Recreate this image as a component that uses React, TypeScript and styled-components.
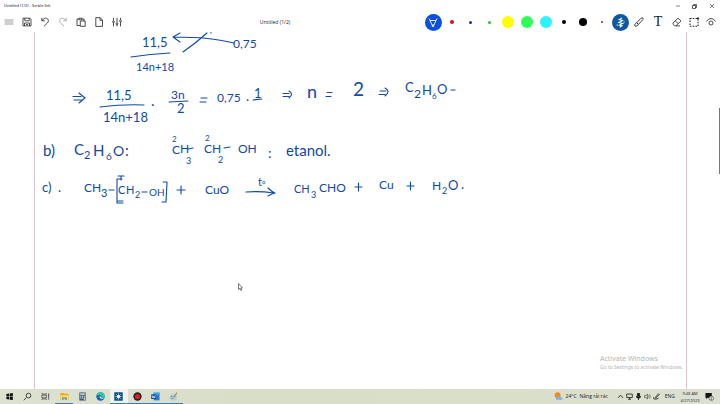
import React from "react";
import styled, { createGlobalStyle } from "styled-components";

const GlobalStyle = createGlobalStyle`
  * { box-sizing: border-box; }
  body { margin: 0; background: #fff; font-family: "Open Sans", "Noto Sans", sans-serif; color: #222; }
  button { font: inherit; color: inherit; border: 0; padding: 0; background: none; }
`;

const Window = styled.div`
  display: flex;
  flex-direction: column;
  height: 100vh;
  overflow: hidden;
`;
const TitleBar = styled.header`
  display: flex;
  justify-content: space-between;
  align-items: center;
  height: 12px;
  padding-left: 4px;
  font-family: "Noto Sans", sans-serif;
  font-size: 4px;
  line-height: 6px;
  color: #111;
`;
const WindowButtons = styled.div`
  display: grid;
  grid-template-columns: repeat(3, 17px);
`;
const IconButton = styled.button`
  display: flex;
  align-items: center;
  justify-content: center;
  min-width: 0;
  height: 100%;
`;
const Toolbar = styled.nav`
  display: flex;
  align-items: center;
  height: 20px;
`;
const FileTools = styled.div`
  display: grid;
  grid-template-columns: repeat(7, 18px);
  height: 100%;
`;
const PenTools = styled.div`
  display: grid;
  grid-template-columns: repeat(14, 1fr) 17px 17px;
  width: 296px;
  height: 100%;
`;
const DocumentName = styled.div`
  flex: 1;
  text-align: center;
  font-size: 5px;
  line-height: 8px;
`;
const Dot = styled.span<{ $size: number; $color: string }>`
  width: ${(p) => p.$size}px;
  height: ${(p) => p.$size}px;
  border-radius: 50%;
  background: ${(p) => p.$color};
`;
const RoundTool = styled.span<{ $color: string }>`
  display: flex;
  align-items: center;
  justify-content: center;
  flex: none;
  width: 17px;
  height: 17px;
  border-radius: 50%;
  background: ${(p) => p.$color};
`;
const TextToolGlyph = styled.span`
  font-family: "Liberation Serif", serif;
  font-size: 14px;
  line-height: 16px;
`;
const Canvas = styled.main`
  position: relative;
  display: flex;
  flex: 1;
  min-height: 0;
  padding-left: 34px;
`;
const Page = styled.section`
  flex: 1;
  border: solid #dfc4cd;
  border-width: 0 1px;
`;
const ScrollTrack = styled.div`
  display: flex;
  justify-content: flex-end;
  width: 33px;
  padding-top: 76px;
`;
const ScrollThumb = styled.div`
  width: 1px;
  height: 66px;
  background: #777;
`;
const Ink = styled.svg`
  position: absolute;
  inset: 0 auto auto 0;
  overflow: hidden;
  font-family: Lato, "Open Sans", sans-serif;
  fill: #1049a8;
`;
const Watermark = styled.aside`
  position: absolute;
  right: 31px;
  bottom: 18px;
  min-width: 89px;
  color: #b5b5b5;
  font-family: "Noto Sans", sans-serif;
  font-size: 5px;
  line-height: 8px;
`;
const WatermarkTitle = styled.div`
  font-size: 7px;
  line-height: 9px;
`;
const Pointer = styled.svg`
  position: absolute;
  left: 238px;
  top: 251px;
`;
const Taskbar = styled.footer`
  display: flex;
  justify-content: space-between;
  height: 15px;
  background: linear-gradient(90deg, #dde1d0, #d9dec9 35%, #dadfca 70%, #dce0d2);
  font-size: 5px;
  line-height: 7px;
`;
const Apps = styled.div`
  display: grid;
  grid-template-columns: repeat(10, 1fr);
  width: 183px;
`;
const AppButton = styled.button<{ $running?: boolean; $active?: boolean }>`
  display: flex;
  align-items: center;
  justify-content: center;
  min-width: 0;
  background: ${(p) => (p.$active ? "#f1f3ec" : "none")};
  box-shadow: ${(p) => (p.$running ? "inset 0 -1px #2d7fc8" : "none")};
`;
const Tray = styled.div`
  display: flex;
  align-items: center;
  gap: 4px;
  padding-right: 6px;
`;
const Weather = styled.button`
  display: flex;
  align-items: center;
  gap: 3px;
  margin-right: 4px;
  white-space: nowrap;
`;
const TrayIcons = styled.div`
  display: grid;
  grid-template-columns: repeat(5, 9px);
  height: 15px;
`;
const Clock = styled.time`
  display: block;
  width: 22px;
  text-align: center;
  font-size: 4px;
  line-height: 7px;
`;

type IconProps = { size?: number; stroke?: string; width?: number; children: React.ReactNode };
const Icon = ({ size = 10, stroke = "#222", width = 0.8, children }: IconProps) => (
  <svg width={size} height={size} viewBox="0 0 10 10" fill="none" stroke={stroke} strokeWidth={width} aria-hidden="true">
    {children}
  </svg>
);

const fileTools = [
  { label: "Menu", art: <path d="M.5 3h9M.5 5h9M.5 7h9" stroke="#777" strokeWidth=".7" /> },
  { label: "Save", art: <path d="M1 1.2h7l1 1v6.7H1zM2.8 1.2v2.6h4.4V1.2M2.5 9V6h5v3M4 7.5h2" /> },
  { label: "Undo", art: <path d="M1.8.8v3h3M2 3.7C3.4 1.5 5 .8 6.5 1.3 8.7 2 9 4.5 7.4 6L4 9.2" /> },
  { label: "Redo", art: <path d="M8.2.8v3h-3M8 3.7C6.6 1.5 5 .8 3.5 1.3 1.3 2 1 4.5 2.6 6L6 9.2" stroke="#999" /> },
  { label: "Paste", art: <path d="M4 8.5H1V2h2m3 0h2v2M3 1.2h3v1.6H3zM4.3 4h4.9v5.3H4.3z" /> },
  { label: "New page", art: <path d="M1.8.6h4.3l2.4 2.6v6.2H1.8zM6 .7v2.6h2.4" /> },
  { label: "Settings", art: <path d="M1.5.8v3m0 2v3.6M5 .8v5m0 2v1.6M8.5.8v2m0 2v4.6M.6 4.8a.9.9 0 1 0 1.8 0 .9.9 0 1 0-1.8 0M4.1 6.8a.9.9 0 1 0 1.8 0 .9.9 0 1 0-1.8 0M7.6 3.8a.9.9 0 1 0 1.8 0 .9.9 0 1 0-1.8 0" /> },
];

const pens = [
  { label: "Red pen", size: 4, color: "#d81016" },
  { label: "Blue pen", size: 3, color: "#1428c8" },
  { label: "Green pen", size: 3, color: "#20c820" },
  { label: "Yellow highlighter", size: 12, color: "#ffff00" },
  { label: "Green highlighter", size: 12, color: "#2fff56" },
  { label: "Cyan highlighter", size: 12, color: "#2df2ff" },
  { label: "Thin black pen", size: 4, color: "#000" },
  { label: "Black pen", size: 8, color: "#000" },
  { label: "Purple pen", size: 2, color: "#6a1b9a" },
];

type Mark = [text: string, x: number, y: number, size: number];
const marks: Mark[] = [
  ["11,5", 142, 47, 13],
  ["14n+18", 136, 71, 11],
  ["0,75", 233, 48, 12],
  ["11,5", 106, 100, 13],
  ["14n+18", 103, 122, 13],
  [".", 151, 106, 15],
  ["3n", 171, 99, 12],
  ["2", 177, 113, 13],
  ["0,75", 217, 102, 12],
  [".", 246, 101, 13],
  ["1", 254, 98, 13],
  ["n", 307, 98, 18],
  ["2", 353, 96, 19],
  ["C", 405, 92, 13],
  ["2", 414, 98, 12],
  ["H", 422, 95, 13],
  ["6", 432, 99, 8],
  ["O", 437, 94, 13],
  ["b)", 43, 156, 15],
  ["C", 74, 155, 15],
  ["2", 84, 159, 11],
  ["H", 93, 156, 15],
  ["6", 106, 160, 10],
  ["O", 113, 156, 14],
  [":", 125, 156, 15],
  ["2", 172, 142, 8],
  ["C", 172, 154, 12],
  ["H", 180, 153, 12],
  ["3", 186, 164, 9],
  ["2", 205, 141, 8],
  ["C", 204, 153, 12],
  ["H", 212, 153, 12],
  ["2", 218, 163, 9],
  ["OH", 238, 153, 12],
  [":", 268, 158, 14],
  ["etanol.", 286, 156, 15],
  ["c)", 42, 192, 13],
  [".", 58, 192, 13],
  ["C", 84, 192, 12],
  ["H", 92, 192, 12],
  ["3", 101, 197, 11],
  ["C", 118, 194, 11],
  ["H", 126, 194, 11],
  ["2", 135, 198, 9],
  ["OH", 149, 196, 10],
  ["CuO", 205, 194, 12],
  ["t", 258, 186, 11],
  ["o", 262, 184, 6],
  ["CH", 294, 193, 11],
  ["3", 311, 198, 9],
  ["CHO", 319, 192, 12],
  ["Cu", 379, 189, 12],
  ["H", 432, 190, 12],
  ["2", 442, 194, 9],
  ["O", 448, 190, 13],
  [".", 461, 189, 13],
];

const strokes = [
  "M131 57Q150 54 170 53",
  "M234 43C216 39 202 37 173 37M180 33L173 37L180 42",
  "M183 52Q196 43 207 33M211 32.5v.5",
  "M100 107Q125 104 144 105",
  "M169 102L188 101",
  "M73 96.500h8M74 100h8M79 93l6 5l-6 5",
  "M201 98h6M200 102h6M253 100l9-1",
  "M283 93.500h6M283 96.500h6M289 91q5 3 0 7",
  "M327 92.500h5M326 96.500h5",
  "M380 91h6M379 94.500h6M385 88q6 3 0 8",
  "M451 90h4",
  "M188 149l5-1M224 148l6-1",
  "M109 190h5M142 192h5",
  "M122 179h-5v24h6M118 201h5M118 176h6M121 176v4",
  "M163 182h4l-1 20h-4",
  "M177 190h8M181 186v8",
  "M246 192Q260 191 274 193M268 188q4 4 7 5q-4 1-7 3",
  "M355 187h7M358.500 183v8M407 186h7M410.500 182v8",
];

const apps = [
  { label: "Start", art: <path d="M1.5 2.2l3-.5v3h-3zM5.2 1.600l3.500-.5v3.600H5.200zM1.500 5.400h3v3l-3-.5zM5.200 5.400h3.500V9l-3.500-.5z" fill="#111" stroke="none" /> },
  { label: "Search", art: <path d="M3.600 6.200L.8 9.200M3.500 4a2.600 2.600 0 1 0 5.200 0a2.600 2.600 0 1 0-5.200 0" /> },
  { label: "Task view", art: <path d="M1 3.500h5v3H1zM1 1.500v.8h5v-.8M1 8.500v-.8h5v.8M8.500 1.500v7M8 4h1" strokeWidth=".7" /> },
  { label: "File Explorer", running: true, art: <g stroke="none"><path d="M.5 1h3.500l1 1h4.500v7H.5z" fill="#e9a928" /><path d="M.5 3.500h9V9h-9z" fill="#ffd65a" /><path d="M2.500 9V6.200h5V9H6.200V7.500H3.800V9z" fill="#3e93d8" /></g> },
  { label: "Calculator", art: <g stroke="none"><path d="M1.500.5h7v9h-7z" fill="#3c5870" /><path d="M2.400 1.400h5.200v1.800H2.400z" fill="#b7dbee" /><path d="M2.400 4.200h1.300v1.100H2.400zm2 0h1.300v1.100H4.400zm2 0h1.300v1.100H6.400zm-4 2h1.300v1.100H2.400zm2 0h1.300v1.100H4.400zm2 0h1.300v2.500H6.400z" fill="#e0edf4" /></g> },
  { label: "Edge", art: <g stroke="none"><circle cx="5" cy="5" r="4.700" fill="#1269bd" /><path d="M.5 4.500C1 1.800 3-.1 5.500.3 8 .5 9.700 2.500 9.700 4.600 9.700 6.200 8 7 6.100 6.500 7 5 5.500 3.300 3.500 3.400 2 3.400 1 3.900.5 4.500z" fill="#37c6a5" /><path d="M4.100 4.800c-.6 1.500 1 3.300 3.800 3L9 7.100C7 7.400 5.700 6.800 5.800 5.500z" fill="#eaf3ef" /></g> },
  { label: "Scrble Ink", running: true, active: true, art: <g stroke="none"><path d="M.3.3h9.400v9.400H.3z" fill="#0b4f8c" /><path d="M5 1.500v7M1.500 5h7M2.500 2.500l5 5M7.500 2.500l-5 5" stroke="#c5e3f6" strokeWidth=".8" /><circle cx="5" cy="5" r="1.700" fill="#fff" /></g> },
  { label: "Recorder", running: true, art: <g stroke="none"><circle cx="5" cy="5" r="4.600" fill="#202020" /><circle cx="5" cy="5" r="2.900" fill="#ed171f" /></g> },
  { label: "Word", running: true, art: <g stroke="none"><path d="M3 .7h6.500v8.600H3z" fill="#2b7cd3" /><path d="M3 .7h6.500v2.500H3z" fill="#41a5ee" /><path d="M.2 2.500h5.600v5.300H.2z" fill="#154ea5" /><path d="M1.200 3.700l.9 3L3 4.500l.9 2.200.9-3" stroke="#fff" strokeWidth=".7" fill="none" /></g> },
  { label: "Paint", running: true, art: <g stroke="none"><ellipse cx="4.700" cy="6" rx="4" ry="3.500" fill="#a9d0df" /><circle cx="3" cy="5" r=".8" fill="#e35b54" /><circle cx="3.500" cy="7.300" r=".8" fill="#58a756" /><path d="M9 .5L5.200 6" stroke="#b98035" strokeWidth="1.200" /></g> },
];

const trayIcons = [
  { label: "Show hidden icons", art: <path d="M1.500 7L5 3l3.500 4" strokeWidth="1.200" /> },
  { label: "Display", art: <path d="M1 1.500h8v5H1zM3 9h4M5 6.500V9" strokeWidth="1.200" /> },
  { label: "Microphone", art: <path d="M3.500.5h3v5h-3zM2 4.500q0 3 3 3t3-3M5 7.500V10" fill="#111" strokeWidth="1.200" /> },
  { label: "Volume", art: <path d="M.8 3.500h2L5 1.500v7l-2.200-2h-2zM6.500 3.500q1 1.500 0 3M8 2q2 3 0 6" stroke="#555" /> },
  { label: "Windows Ink", art: <path d="M3 6.500L8 1l1 1-5 5.200zM1 6q-1 3 2 2.800t5-1.300" strokeWidth="1.200" /> },
];

export default function App() {
  return (
    <>
      <GlobalStyle />
      <Window>
        <TitleBar>
          <span>Untitled (1/2) - Scrble Ink</span>
          <WindowButtons>
            <IconButton aria-label="Minimize"><Icon size={4} width={1.4}><path d="M0 5h10" /></Icon></IconButton>
            <IconButton aria-label="Restore"><Icon size={5} width={1.4}><path d="M1 3h6v6H1zM3 3V1h6v6H7" /></Icon></IconButton>
            <IconButton aria-label="Close"><Icon size={4} width={1.5}><path d="M0 0l10 10M10 0L0 10" /></Icon></IconButton>
          </WindowButtons>
        </TitleBar>
        <Toolbar>
          <FileTools>
            {fileTools.map((t) => (
              <IconButton key={t.label} aria-label={t.label}><Icon>{t.art}</Icon></IconButton>
            ))}
          </FileTools>
          <DocumentName>Untitled (1/2)</DocumentName>
          <PenTools>
            <IconButton aria-label="Selected pen">
              <RoundTool $color="#0a4fe0">
                <Icon size={10} stroke="#fff" width={0.9}><path d="M1 1.500l1 2h6l1-2M2 3.500L4 8h2l2-4.500M4.200 8.500h1.600v1H4.200z" /></Icon>
              </RoundTool>
            </IconButton>
            {pens.map((p) => (
              <IconButton key={p.label} aria-label={p.label}><Dot $size={p.size} $color={p.color} /></IconButton>
            ))}
            <IconButton aria-label="Scribble">
              <RoundTool $color="#0d57a3">
                <Icon size={11} stroke="#fff" width={1}><path d="M6.500.8L3.800 2.300l3 .9-3.300 1.800 3.500.8-3 1.500 2.300.7L4.300 9.300M7.800 4.700l.9-.4M1.500 7.500l.9-.4" /></Icon>
              </RoundTool>
            </IconButton>
            <IconButton aria-label="Ruler"><Icon width={0.9}><path d="M1 7.300L7.300 1q1-.7 1.600.2t0 1.500L2.800 9Q1.800 9.600 1 8.900T1 7.300zM2.700 5.700l1.500 1.500" /></Icon></IconButton>
            <IconButton aria-label="Text"><TextToolGlyph>T</TextToolGlyph></IconButton>
            <IconButton aria-label="Eraser"><Icon><path d="M1 6L6 1.200l3 2.700L4 8.700H2.500L1 7.300zM3.300 4l3 2.700M4 8.900h4" /></Icon></IconButton>
            <IconButton aria-label="Select area"><Icon width={1.1}><path d="M1 1.500h8v7.800H1z" strokeDasharray="1.500 1.300" /><circle cx="9" cy="1.200" r=".5" /></Icon></IconButton>
            <IconButton aria-label="View"><Icon><path d="M.5 4.500Q2 1.500 5 1.500t4.500 3M3 6a2 2 0 1 0 4 0a2 2 0 1 0-4 0" /></Icon></IconButton>
          </PenTools>
        </Toolbar>
        <Canvas>
          <Page aria-label="Page 1" />
          <ScrollTrack><ScrollThumb /></ScrollTrack>
          <Ink width="720" height="357" viewBox="0 32 720 357" role="img" aria-label="Handwritten chemistry notes">
            {marks.map(([text, x, y, size]) => (
              <text key={`${x}-${y}`} x={x} y={y} fontSize={size}>{text}</text>
            ))}
            <g fill="none" stroke="#1049a8" strokeWidth="1.100" strokeLinecap="round" strokeLinejoin="round">
              {strokes.map((d) => <path key={d} d={d} />)}
            </g>
          </Ink>
          <Pointer width="5" height="8" viewBox="0 0 5 8" aria-hidden="true">
            <path d="M.5.5v6l1.300-1.200 1 2.200 1-.5-1-2H4.500z" fill="#fff" stroke="#444" strokeWidth=".7" />
          </Pointer>
          <Watermark>
            <WatermarkTitle>Activate Windows</WatermarkTitle>
            Go to Settings to activate Windows.
          </Watermark>
        </Canvas>
        <Taskbar>
          <Apps>
            {apps.map((a) => (
              <AppButton key={a.label} aria-label={a.label} $running={a.running} $active={a.active}>
                <Icon size={9} width={0.9}>{a.art}</Icon>
              </AppButton>
            ))}
          </Apps>
          <Tray>
            <Weather>
              <Icon size={9}>
                <circle cx="4" cy="3.500" r="3.300" fill="#f18b20" stroke="none" />
                <path d="M2.500 8.500q-1-2.500 1.500-3 2-2 3.500 0Q9.700 5.700 9.500 8.500z" fill="#76b4ea" stroke="none" />
              </Icon>
              <span>24°C</span>
              <span>Nắng rải rác</span>
            </Weather>
            <TrayIcons>
              {trayIcons.map((t) => (
                <IconButton key={t.label} aria-label={t.label}><Icon size={7} width={1}>{t.art}</Icon></IconButton>
              ))}
            </TrayIcons>
            <span>ENG</span>
            <Clock>9:48 AM<br />4/27/2023</Clock>
            <IconButton aria-label="2 notifications">
              <Icon size={9}>
                <path d="M.5 1h7v5.500H3L1.500 8V6.500h-1z" fill="#111" stroke="none" />
                <circle cx="7" cy="7" r="2.500" fill="#e3e6da" strokeWidth=".5" />
                <path d="M6.200 6.200q.8-.8 1.400 0T6.200 8.200h1.600" strokeWidth=".5" />
              </Icon>
            </IconButton>
          </Tray>
        </Taskbar>
      </Window>
    </>
  );
}
